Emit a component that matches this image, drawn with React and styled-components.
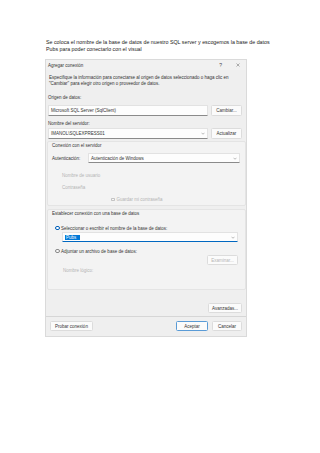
import React from 'react';
import styled, { createGlobalStyle } from 'styled-components';

const GlobalStyle = createGlobalStyle`
  body {
    margin: 0;
    background: #ffffff;
    font-family: "Liberation Sans", Arial, sans-serif;
  }
`

const Page = styled.div`
  width: 320px;
  height: 453px;
  padding: 39px 0 0 46px;
  box-sizing: border-box;
`

const Intro = styled.p`
  margin: 0;
  font-size: 5.3px;
  line-height: 7px;
  color: #222;
  white-space: nowrap;
`

const Dialog = styled.div`
  width: 202px;
  height: 278px;
  margin: 6px 0 0 -1px;
  box-sizing: border-box;
  border: 1px solid #dadada;
  background: #efefef;
  font-size: 4.5px;
  color: #333;
  display: flex;
  flex-direction: column;
`

const TitleBar = styled.div`
  height: 10px;
  padding: 0 6px 0 2px;
  display: flex;
  align-items: center;
  justify-content: space-between;
  background: #f1f1f1;
`

const TitleActions = styled.div`
  display: flex;
  align-items: center;
  gap: 14px;
  font-size: 5px;
  color: #444;
`

const Body = styled.div`
  flex: 1;
  padding: 5px 4px 5px 2px;
  display: flex;
  flex-direction: column;
`

const Description = styled.div`
  padding-left: 1px;
  line-height: 6px;
  white-space: nowrap;
`

const Text = styled.div`
  height: ${p => p.$h || 6}px;
  line-height: ${p => p.$h || 6}px;
  margin-top: ${p => p.$mt || 0}px;
  padding-left: ${p => p.$indent || 0}px;
  color: ${p => (p.$disabled ? '#b4b4b4' : 'inherit')};
  white-space: nowrap;
`

const Row = styled.div`
  display: flex;
  align-items: center;
  gap: ${p => p.$gap ?? 3}px;
  margin-top: ${p => p.$mt || 0}px;
  padding-left: ${p => p.$indent || 0}px;
  height: ${p => p.$h || 11}px;
  justify-content: ${p => (p.$end ? 'flex-end' : 'flex-start')};
`

const TextBox = styled.div`
  flex: 1;
  align-self: stretch;
  display: flex;
  align-items: center;
  justify-content: space-between;
  padding: 0 2px 0 2px;
  margin-right: ${p => p.$mr || 0}px;
  margin-left: ${p => p.$ml || 0}px;
  background: #fdfdfd;
  border: 1px solid #e2e2e2;
  border-bottom-color: ${p => (p.$focused ? '#0067c0' : '#8a8a8a')};
  border-radius: 1px;
  box-sizing: border-box;
  white-space: nowrap;
`

const Selected = styled.span`
  background: #0078d7;
  color: #fff;
  padding: 0 4px 0 1px;
`

const Button = styled.div`
  width: ${p => p.$w}px;
  height: ${p => p.$h || 11}px;
  margin-right: ${p => p.$mr || 0}px;
  margin-left: ${p => p.$ml || 0}px;
  display: flex;
  align-items: center;
  justify-content: center;
  box-sizing: border-box;
  background: #fbfbfb;
  border: 1px solid ${p => (p.$primary ? '#5a9bd6' : '#dcdcdc')};
  border-radius: 1.5px;
  color: ${p => (p.$disabled ? '#b4b4b4' : '#333')};
  white-space: nowrap;
`

const Group = styled.div`
  margin: ${p => p.$mt || 0}px -4px 0 -1px;
  padding: 1px 5px ${p => p.$pb || 2}px 4px;
  border: 1px solid #e4e4e4;
  border-radius: 2px;
  background: #f3f3f3;
  display: flex;
  flex-direction: column;
`

const Label = styled.span`
  width: ${p => p.$w}px;
  flex-shrink: 0;
`

const Check = styled.span`
  width: 3.5px;
  height: 3.5px;
  border: 0.6px solid #c4c4c4;
  border-radius: 0.8px;
  background: #f7f7f7;
  box-sizing: border-box;
`

const Radio = styled.span`
  width: 4.6px;
  height: 4.6px;
  border-radius: 50%;
  box-sizing: border-box;
  flex-shrink: 0;
  border: ${p => (p.$checked ? '1.3px solid #005fb8' : '0.6px solid #8a8a8a')};
  background: ${p => (p.$checked ? '#fff' : '#f7f7f7')};
`

const Separator = styled.div`
  height: 1px;
  margin: 3px -4px 0 -2px;
  background: #d6d6d6;
`

const Footer = styled.div`
  display: flex;
  align-items: center;
  gap: 4px;
  margin-top: 4px;
  height: 10px;
  padding-left: 2px;
`

const Spacer = styled.div`
  flex: 1;
`

function Chevron() {
  return (
    <svg width="4" height="3" viewBox="0 0 8 6">
      <path d="M1 1.5 L4 4.5 L7 1.5" fill="none" stroke="#777" strokeWidth="1" />
    </svg>
  )
}

function CloseIcon() {
  return (
    <svg width="4" height="4" viewBox="0 0 8 8">
      <path d="M1 1 L7 7 M7 1 L1 7" stroke="#555" strokeWidth="0.9" />
    </svg>
  )
}

export default function App() {
  return (
    <Page>
      <GlobalStyle />
      <Intro>
        Se coloca el nombre de la base de datos de nuestro SQL server y escogemos la base de datos
        <br />
        Pubs para poder conectarlo con el visual
      </Intro>

      <Dialog>
        <TitleBar>
          <span>Agregar conexión</span>
          <TitleActions>
            <span>?</span>
            <CloseIcon />
          </TitleActions>
        </TitleBar>

        <Body>
          <Description>
            Especifique la información para conectarse al origen de datos seleccionado o haga clic en
            <br />
            "Cambiar" para elegir otro origen o proveedor de datos.
          </Description>

          <Text $mt={8}>Origen de datos:</Text>
          <Row $mt={4}>
            <TextBox>Microsoft SQL Server (SqlClient)</TextBox>
            <Button $w={31}>Cambiar...</Button>
          </Row>

          <Text $mt={5}>Nombre del servidor:</Text>
          <Row $mt={1}>
            <TextBox>
              <span>IMANOL\SQLEXPRESS01</span>
              <Chevron />
            </TextBox>
            <Button $w={31}>Actualizar</Button>
          </Row>

          <Group $mt={2}>
            <Text>Conexión con el servidor</Text>
            <Row $mt={4} $h={10} $gap={0}>
              <Label $w={36}>Autenticación:</Label>
              <TextBox>
                <span>Autenticación de Windows</span>
                <Chevron />
              </TextBox>
            </Row>
            <Text $mt={8} $h={9} $indent={10} $disabled>Nombre de usuario</Text>
            <Text $mt={3} $h={9} $indent={10} $disabled>Contraseña</Text>
            <Row $mt={4} $h={7} $gap={2} $indent={59}>
              <Check />
              <Text $disabled>Guardar mi contraseña</Text>
            </Row>
          </Group>

          <Group $mt={3} $pb={14}>
            <Text>Establecer conexión con una base de datos</Text>
            <Row $mt={8} $h={6} $gap={1.5} $indent={3}>
              <Radio $checked />
              <span>Seleccionar o escribir el nombre de la base de datos:</span>
            </Row>
            <Row $mt={1} $h={10}>
              <TextBox $focused $ml={10} $mr={2}>
                <Selected>Pubs</Selected>
                <Chevron />
              </TextBox>
            </Row>
            <Row $mt={6} $h={6} $gap={1.5} $indent={3}>
              <Radio />
              <span>Adjuntar un archivo de base de datos:</span>
            </Row>
            <Row $mt={1} $h={10} $end>
              <Button $w={31} $h={10} $mr={2} $disabled>Examinar...</Button>
            </Row>
            <Text $mt={2} $h={8} $indent={11} $disabled>Nombre lógico:</Text>
          </Group>

          <Row $mt={13} $h={10} $end>
            <Button $w={34} $h={10}>Avanzadas...</Button>
          </Row>
          <Separator />
          <Footer>
            <Button $w={43} $h={10}>Probar conexión</Button>
            <Spacer />
            <Button $w={32} $h={10} $primary>Aceptar</Button>
            <Button $w={30} $h={10}>Cancelar</Button>
          </Footer>
        </Body>
      </Dialog>
    </Page>
  )
}
